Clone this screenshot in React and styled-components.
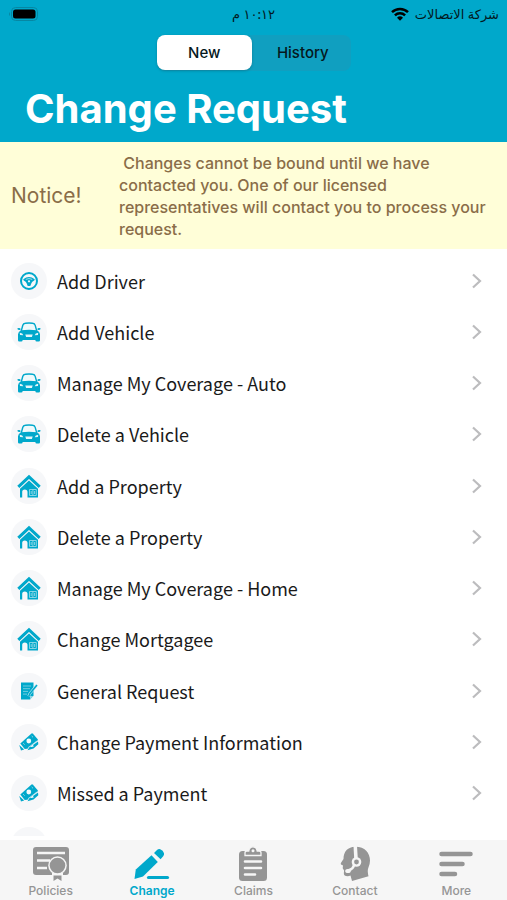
import React, { useState } from "react";
import styled, { createGlobalStyle } from "styled-components";

const TEAL = "#00a8cb";
const UI = '"Inter", "Liberation Sans", sans-serif';
const LIST = '"Noto Sans CJK SC", "Noto Sans", sans-serif';

const GlobalStyle = createGlobalStyle`
  *, *::before, *::after { box-sizing: border-box; }
  body { margin: 0; background: #fff; font-family: ${UI}; }
  button { font: inherit; color: inherit; border: 0; padding: 0; background: none; cursor: pointer; }
  svg { display: block; }
`;

const Screen = styled.div`
  display: flex;
  flex-direction: column;
  height: 100vh;
  background: #fff;
`;

const Header = styled.header`
  flex: none;
  background: ${TEAL};
  padding-bottom: 8px;
`;

const StatusBar = styled.div`
  display: grid;
  grid-template-columns: 1fr auto 1fr;
  align-items: center;
  height: 27px;
  padding: 0 8px;
  font: 500 13px/20px "Noto Sans", "DejaVu Sans", sans-serif;
  color: #03181d;
`;

const Carrier = styled.div`
  display: flex;
  align-items: center;
  justify-content: flex-end;
  gap: 6px;
`;

const Segments = styled.div`
  display: flex;
  gap: 3px;
  width: 194px;
  height: 36px;
  margin: 8px auto 0;
  border-radius: 8px;
  background: #109fc0;
`;

const Segment = styled.button`
  && {
    flex: 1;
    height: 35px;
    border-radius: 8px;
    font-size: 15px;
    font-weight: 500;
    color: #05181d;
    background: ${(p) => (p.$active ? "#fff" : "transparent")};
    box-shadow: ${(p) => (p.$active ? "0 1px 3px rgba(0, 0, 0, 0.2)" : "none")};
  }
`;

const Title = styled.h1`
  margin: 13px 25px 0;
  font-size: 40px;
  line-height: 50px;
  font-weight: 700;
  color: #fff;
`;

const Notice = styled.section`
  flex: none;
  display: flex;
  align-items: center;
  padding: 10px 12px 9px 11px;
  background: #fffed8;
  color: #8a6d48;
`;

const NoticeTitle = styled.strong`
  flex: 0 0 108px;
  font-size: 21px;
  line-height: 28px;
  font-weight: 400;
`;

const NoticeText = styled.p`
  flex: 1;
  margin: 0;
  font-size: 16px;
  line-height: 22px;
  font-weight: 500;
  white-space: pre-wrap;
`;

const List = styled.ul`
  flex: 1;
  display: flex;
  flex-direction: column;
  min-height: 0;
  margin: 0 0 4px;
  padding: 6px 0 0;
  overflow: hidden;
  list-style: none;
`;

const Item = styled.li`
  flex: 1 0 44px;
  display: flex;
`;

const PeekItem = styled.li`
  flex: none;
  height: 17px;
  padding-top: 8px;
  padding-left: 11px;
  overflow: hidden;
`;

const Row = styled.button`
  && {
    display: flex;
    align-items: center;
    width: 100%;
    padding: 0 24px 0 11px;
    text-align: left;
    font-family: ${LIST};
    font-size: 18px;
    line-height: 28px;
    color: #1a1a1a;
  }
`;

const Disc = styled.span`
  flex: none;
  display: grid;
  place-items: center;
  width: 36px;
  height: 36px;
  margin-right: 10px;
  border-radius: 50%;
  background: #f6f7f9;
`;

const RowLabel = styled.span`
  flex: 1;
`;

const TabBar = styled.nav`
  flex: none;
  display: grid;
  grid-template-columns: repeat(5, 1fr);
  height: 60px;
  background: #f6f6f6;
`;

const Tab = styled.button`
  && {
    display: flex;
    flex-direction: column;
    align-items: center;
    justify-content: flex-end;
    gap: 1px;
    padding-bottom: 1px;
    font-size: 12px;
    line-height: 16px;
    font-weight: ${(p) => (p.$active ? 600 : 500)};
    color: ${(p) => (p.$active ? TEAL : "#959595")};
  }
`;

const BatteryIcon = () => (
  <svg width="30" height="14" viewBox="0 0 30 14" aria-label="Battery">
    <rect x="3.5" y=".5" width="26" height="13" rx="4" fill="none" stroke="#0687a3" />
    <rect x="5" y="2.5" width="22.500" height="9" rx="2.500" fill="#000" />
    <path d="M2 5a2.500 2.500 0 0 0 0 4z" fill="#0687a3" />
  </svg>
);

const WifiIcon = () => (
  <svg width="18" height="14" viewBox="0 0 18 14" fill="none" stroke="#000" strokeWidth="2.500" aria-label="Wi-Fi">
    <path d="M1 5.200a11.500 11.500 0 0 1 16 0" />
    <path d="M3.900 8.300a7.400 7.400 0 0 1 10.200 0" />
    <path d="M9 13.700 6 10.700a4.300 4.300 0 0 1 6 0z" fill="#000" stroke="none" />
  </svg>
);

const ChevronIcon = () => (
  <svg width="12" height="16" viewBox="0 0 12 16" fill="none" stroke="#bcbcbe" strokeWidth="2.200" aria-hidden="true">
    <path d="M2 1.500 9 8l-7 6.500" />
  </svg>
);

const WheelIcon = () => (
  <svg width="20" height="20" viewBox="0 0 20 20" aria-hidden="true">
    <circle cx="10" cy="10" r="8" fill="none" stroke={TEAL} strokeWidth="2" />
    <path d="M4.300 8.300Q10 3.800 15.700 8.300q.2 1.300-1.200 1.800-1.300.4-2 2L11.300 15H8.700l-1.200-2.900q-.7-1.600-2-2-1.400-.5-1.200-1.800z" fill={TEAL} />
    <path d="M6.800 8.400Q10 6.700 13.200 8.400" fill="none" stroke="#c9eaf1" strokeWidth=".8" />
    <circle cx="10" cy="10.300" r="1.100" fill="#f6f7f9" />
  </svg>
);

const CarIcon = () => (
  <svg width="24" height="20" viewBox="0 0 24 20" aria-hidden="true">
    <path d="M4.300 8.800 5.800 3.300Q6.300 1.300 8.300 1.200 12 .8 15.700 1.200q2 .1 2.500 2.100l1.500 5.500" fill="#eef9fb" stroke={TEAL} strokeWidth="1.400" />
    <path d="M.3 6.800Q.5 5.800 2.300 6q1.300.2 1.500 1.200l-1 .8Q.5 8 .3 6.800zM23.700 6.800Q23.500 5.800 21.700 6q-1.300.2-1.500 1.200l1 .8Q23.500 8 23.700 6.800z" fill={TEAL} />
    <path d="M4 8.200q8-1 16 0 2.800 1.300 3 4v6q0 1.300-1.300 1.300h-2Q18.500 19.500 18.300 18H5.700Q5.500 19.500 4.300 19.500h-2Q1 19.500 1 18.200v-6q.2-2.700 3-4z" fill={TEAL} />
    <path d="M2.800 10.800q3 .2 3.500 2.400l-3.300-.1zM21.200 10.800q-3 .2-3.500 2.400l3.300-.1zM8.300 12.500h7.400l-.8 2.400H9.100z" fill="#e4f5f9" />
  </svg>
);

const HouseIcon = () => (
  <svg width="24" height="24" viewBox="0 0 24 24" aria-hidden="true">
    <path d="M1.300 12.800 12 2.800l10.700 10" fill="none" stroke={TEAL} strokeWidth="3" />
    <path d="M12 6.400 21 14.800V23.500H10.500V18q0-2.500-2.700-2.500T5.200 18v5.500H3V14.800z" fill={TEAL} />
    <path d="M12.500 15.500h6.800v6h-6.800zM15.900 15.500v6M14.200 17v3M17.600 17v3" fill="none" stroke="#a6dfeb" strokeWidth=".8" />
  </svg>
);

const NoteIcon = () => (
  <svg width="18" height="18" viewBox="0 0 18 18" aria-hidden="true">
    <path d="M1 .5h12.500v12.700L10 17.500H1z" fill={TEAL} />
    <path d="M3 4h8M3 6.700h7M3 9.400h5M3 12.100h4" stroke="#8ed6e5" strokeWidth=".8" />
    <path d="m16.800 3.200-7 8.500-1.200 2.500" fill="none" stroke="#c9eaf1" strokeWidth="2.600" />
    <path d="m17 3-7 8.400-1.300 3" fill="none" stroke={TEAL} strokeWidth="1.500" />
    <path d="M10 17.500v-3.500h3.500z" fill="#8ed6e5" />
  </svg>
);

const MoneyIcon = () => (
  <svg width="20" height="18" viewBox="0 0 20 18" aria-hidden="true">
    <path d="M1.300 10.500 12.500.5q.8-.6 1.500.2l4.700 5.600q.4.700-.2 1.300L8.300 15.800 5.700 16z" fill={TEAL} />
    <path d="M.2 12 2 17.500l3.200-1zM8.500 17.300l6-1.800 4.800-4.200-.3-2.800-5 3.600.8 1.300-2.600.6-1.400-.4z" fill={TEAL} />
    <circle cx="9.800" cy="8" r="2.400" fill="#f1fafc" />
    <path d="m12.700 3 1.200 1.200M4.300 10.300l1.200 1.300M9 14.700l8.800-6.600" stroke="#c9eaf1" strokeWidth=".8" />
  </svg>
);

const PoliciesIcon = () => (
  <svg width="40" height="36" viewBox="0 0 40 36" aria-hidden="true">
    <rect x="2" y="1" width="36" height="28" rx="3" fill="currentColor" />
    <path d="M6 7h28M6 14.500h13M6 22h10" stroke="#f6f6f6" strokeWidth="2.600" />
    <circle cx="26.500" cy="19.500" r="9.300" fill="#f6f6f6" />
    <path d="M21 27h11v9H21z" fill="#f6f6f6" />
    <circle cx="26.500" cy="19.500" r="7.800" fill="currentColor" />
    <path d="M22.500 29.500h8V35l-4-2.500-4 2.500z" fill="currentColor" />
  </svg>
);

const PencilIcon = () => (
  <svg width="40" height="36" viewBox="0 0 40 36" aria-hidden="true">
    <path d="m2.500 33 1.300-9.500L19.500 9.200l6.300 6.800L11 30.500z" fill="currentColor" />
    <path d="m22 7 3-3q1.500-1.300 3.200-.8 3 1 3.800 4 .4 1.700-.8 3L28.600 13.300z" fill="currentColor" />
    <path d="M16.500 31.500h19" stroke="currentColor" strokeWidth="3.200" strokeLinecap="round" />
  </svg>
);

const ClaimsIcon = () => (
  <svg width="40" height="36" viewBox="0 0 40 36" aria-hidden="true">
    <rect x="6" y="5" width="28" height="30" rx="3.500" fill="currentColor" />
    <path d="M12 9.500V6.800Q12 5 14 5h1.800Q16.300.8 20 .8T24.200 5H26q2 0 2 1.800v2.700z" fill="currentColor" stroke="#f6f6f6" strokeWidth="1.300" />
    <circle cx="20" cy="4.700" r="1.500" fill="#f6f6f6" />
    <path d="M12 15.500h16M12 22h16M12 28.500h10" stroke="#f6f6f6" strokeWidth="2.600" strokeLinecap="round" />
  </svg>
);

const ContactIcon = () => (
  <svg width="40" height="36" viewBox="0 0 40 36" aria-hidden="true">
    <path d="M20 .8C29.500.5 35 6.800 35 14.500q0 4-1.800 7.800-1 2.500.3 8L17 35l-1.500-5.500q-1.500.8-4.300.6-2.700-.3-2.300-3.600l.2-2-1.400-2.300.3-2.700-2-1q-.7-.7.2-2L8.500 13C8.500 5.500 13 1 20 .8z" fill="currentColor" />
    <path d="m18.500 0 3.500-.2.800 13-3.600 0z" fill="#f6f6f6" />
    <path d="M19 18q0 5-6.500 6.700" fill="none" stroke="#f6f6f6" strokeWidth="2.500" />
    <circle cx="21.500" cy="16" r="4.800" fill="#f6f6f6" />
    <circle cx="21.500" cy="16" r="2.400" fill="currentColor" />
    <ellipse cx="13" cy="25" rx="2.800" ry="2" fill="#f6f6f6" />
  </svg>
);

const MoreIcon = () => (
  <svg width="40" height="36" viewBox="0 0 40 36" fill="none" stroke="currentColor" strokeWidth="4.500" strokeLinecap="round" aria-hidden="true">
    <path d="M5.500 8h29M5.500 18h21M5.500 28H19" />
  </svg>
);

const requests = [
  ["Add Driver", WheelIcon],
  ["Add Vehicle", CarIcon],
  ["Manage My Coverage - Auto", CarIcon],
  ["Delete a Vehicle", CarIcon],
  ["Add a Property", HouseIcon],
  ["Delete a Property", HouseIcon],
  ["Manage My Coverage - Home", HouseIcon],
  ["Change Mortgagee", HouseIcon],
  ["General Request", NoteIcon],
  ["Change Payment Information", MoneyIcon],
  ["Missed a Payment", MoneyIcon],
];

const tabs = [
  ["Policies", PoliciesIcon],
  ["Change", PencilIcon],
  ["Claims", ClaimsIcon],
  ["Contact", ContactIcon],
  ["More", MoreIcon],
];

export default function App() {
  const [segment, setSegment] = useState("New");
  const [tab, setTab] = useState("Change");
  return (
    <Screen>
      <GlobalStyle />
      <Header>
        <StatusBar>
          <BatteryIcon />
          <span dir="rtl" lang="ar">١٠:١٢ م</span>
          <Carrier>
            <WifiIcon />
            <span dir="rtl" lang="ar">شركة الاتصالات</span>
          </Carrier>
        </StatusBar>
        <Segments>
          {["New", "History"].map((name) => (
            <Segment key={name} $active={segment === name} aria-pressed={segment === name} onClick={() => setSegment(name)}>
              {name}
            </Segment>
          ))}
        </Segments>
        <Title>Change Request</Title>
      </Header>
      <Notice>
        <NoticeTitle>Notice!</NoticeTitle>
        <NoticeText>
          {" Changes cannot be bound until we have contacted you. One of our licensed representatives will contact you to process your request."}
        </NoticeText>
      </Notice>
      <List>
        {requests.map(([label, Icon]) => (
          <Item key={label}>
            <Row>
              <Disc><Icon /></Disc>
              <RowLabel>{label}</RowLabel>
              <ChevronIcon />
            </Row>
          </Item>
        ))}
        <PeekItem aria-hidden="true">
          <Disc />
        </PeekItem>
      </List>
      <TabBar>
        {tabs.map(([label, Icon]) => (
          <Tab key={label} $active={tab === label} onClick={() => setTab(label)}>
            <Icon />
            {label}
          </Tab>
        ))}
      </TabBar>
    </Screen>
  );
}
